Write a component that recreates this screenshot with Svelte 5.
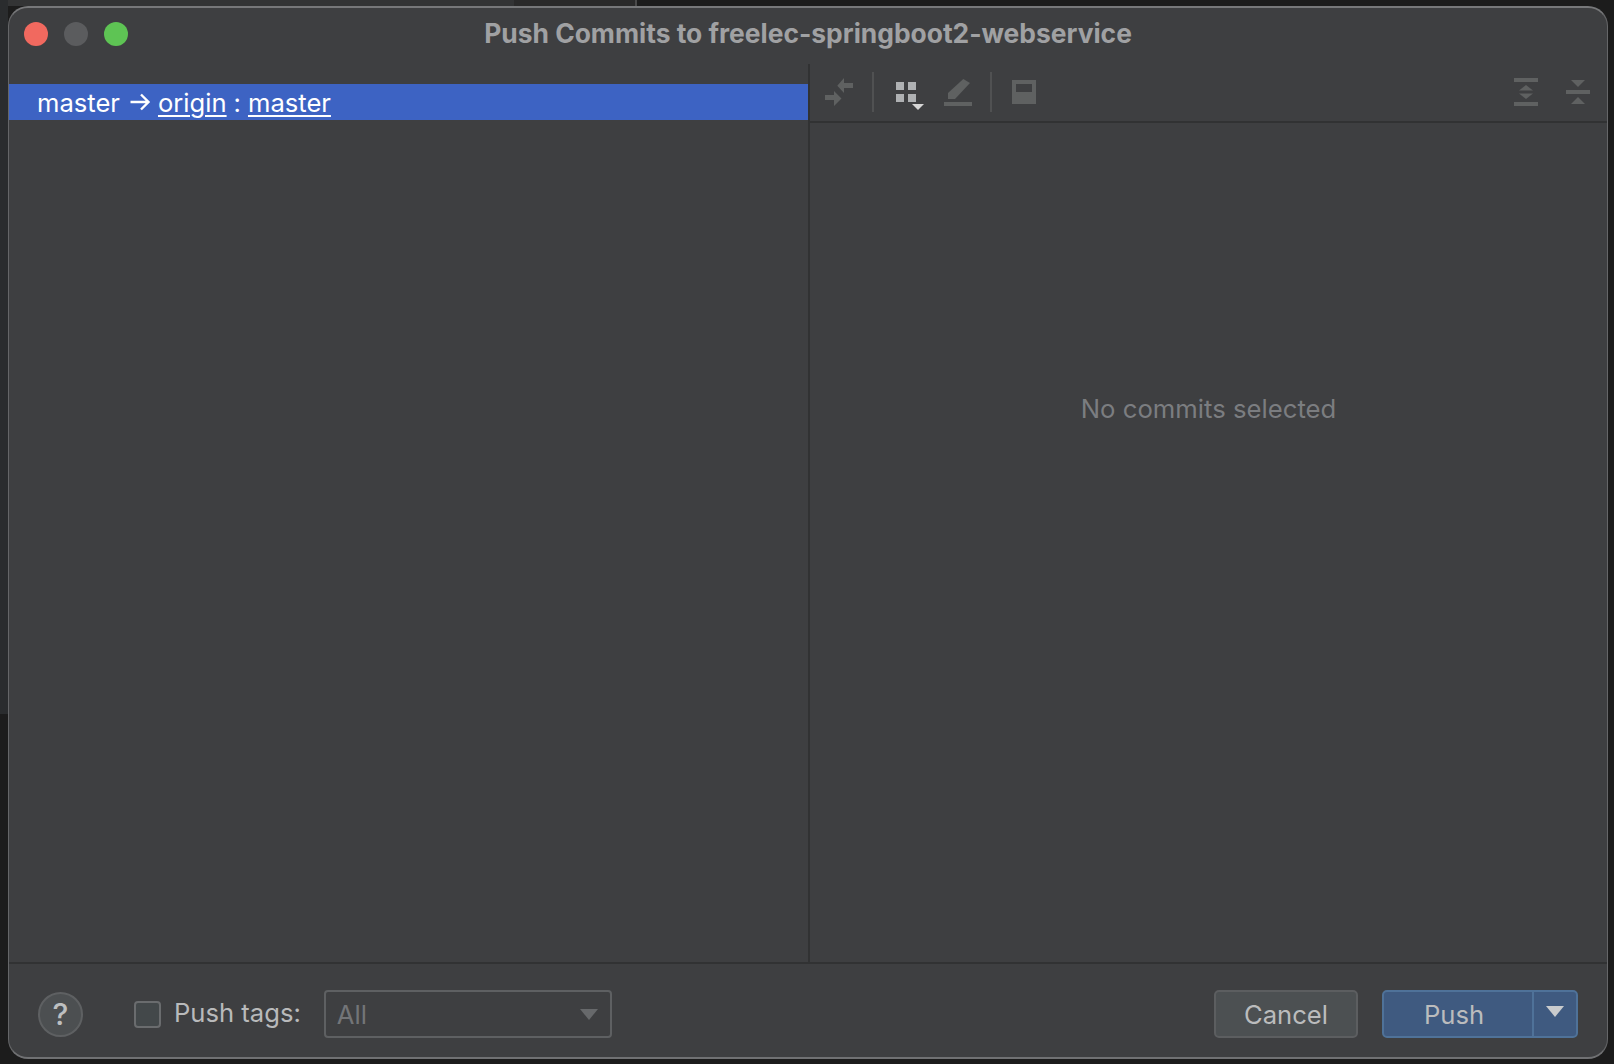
<script>
  const title = 'Push Commits to freelec-springboot2-webservice'
</script>

<div class="window">
  <header class="titlebar">
    <div class="lights">
      <span class="light red"></span>
      <span class="light gray"></span>
      <span class="light green"></span>
    </div>
    <h1>{title}</h1>
  </header>

  <main class="panes">
    <section class="left">
      <div class="row">
        <span>master</span>
        <svg class="arrow" width="22" height="22" viewBox="0 0 22 22" fill="none" stroke="#fff" stroke-width="2.4">
          <path d="M1.500 11H19.500M12 3.500L19.500 11L12 18.500" />
        </svg>
        <u>origin</u>
        <span>:</span>
        <u>master</u>
      </div>
    </section>

    <section class="right">
      <div class="toolbar">
        <svg class="tool" width="28" height="28" viewBox="0 0 28 28" fill="#5f6161">
          <path d="M12.300 7.700L19 0V5H28V10H19V15Z" />
          <path d="M16.500 20.500L9 13V17H0V22H9V28Z" />
        </svg>
        <i class="sep first"></i>
        <div class="grid-icon">
          <svg width="28" height="28" viewBox="0 0 28 28" fill="#afb1b3">
            <rect x="0" y="0" width="8" height="8" />
            <rect x="12" y="0" width="8" height="8" />
            <rect x="0" y="12" width="8" height="8" />
            <rect x="12" y="12" width="8" height="8" />
            <path d="M16 22H28L22 28Z" fill="#d6d6d6" />
          </svg>
        </div>
        <svg class="tool" width="28" height="28" viewBox="0 0 28 28" fill="#5f6161">
          <path d="M4 15L19.300 1L26 5L11 21H4Z" />
          <rect x="0" y="24" width="28" height="4" />
        </svg>
        <i class="sep second"></i>
        <svg class="tool" width="24" height="24" viewBox="0 0 24 24">
          <path fill="#5f6161" fill-rule="evenodd" d="M0 0H24V24H0ZM4 4V12H20V4Z" />
        </svg>
        <div class="spacer"></div>
        <svg class="tool" width="24" height="28" viewBox="0 0 24 28" fill="#5f6161">
          <rect x="0" y="0" width="24" height="4" />
          <path d="M12 7L19 12.500H5Z" />
          <path d="M5 15.500H19L12 21Z" />
          <rect x="0" y="24" width="24" height="4" />
        </svg>
        <svg class="tool collapse" width="24" height="24" viewBox="0 0 24 24" fill="#5f6161">
          <path d="M5 0H19L12 7Z" />
          <rect x="0" y="10" width="24" height="4" />
          <path d="M12 17L19 24H5Z" />
        </svg>
      </div>
      <div class="details">No commits selected</div>
    </section>
  </main>

  <footer class="footer">
    <button class="help">?</button>
    <label class="tags">
      <span class="check"></span>
      <span class="tags-text">Push tags:</span>
    </label>
    <div class="combo">
      <span>All</span>
      <span class="caret"></span>
    </div>
    <div class="spacer"></div>
    <button class="btn cancel">Cancel</button>
    <div class="push">
      <button class="push-main">Push</button>
      <button class="push-menu"><span class="menu-caret"></span></button>
    </div>
  </footer>
</div>

<style>
  :global(body) {
    /* bits of the desktop showing behind the dialog */
    background:
      linear-gradient(#2a2c2e, #2a2c2e) 0 0 / 8px 714px no-repeat,
      linear-gradient(#333435, #333435) 0 0 / 514px 6px no-repeat,
      linear-gradient(#2a2a2a, #2a2a2a) 514px 0 / 121px 6px no-repeat,
      linear-gradient(#4a4a4a, #4a4a4a) 635px 0 / 2px 6px no-repeat,
      #1c1c1c;
    overflow: hidden;
  }

  .window {
    box-sizing: border-box;
    display: flex;
    flex-direction: column;
    height: 1053px;
    margin: 6px 6px 0 8px;
    background: #3e3f41;
    border: 1px solid #656668;
    border-top: 2px solid #77787a;
    border-bottom: 2px solid #707173;
    border-radius: 20px;
    font-family: Inter, 'Liberation Sans', sans-serif;
    color: #bbb;
    overflow: hidden;
  }

  .titlebar {
    display: grid;
    grid-template-columns: 1fr auto 1fr;
    align-items: center;
    height: 52px;
    padding: 0 15px 4px;
    flex: none;
  }

  .lights {
    display: flex;
    gap: 16px;
  }

  .light {
    width: 24px;
    height: 24px;
    border-radius: 50%;
  }

  .red { background: #f1695f; }
  .gray { background: #5b5c5e; }
  .green { background: #5ec454; }

  h1 {
    margin: 0 0 3px;
    font-size: 26.4px;
    font-weight: 700;
    color: #a0a1a3;
    white-space: nowrap;
  }

  .panes {
    display: flex;
    flex: 1;
    min-height: 0;
  }

  .left {
    width: 799px;
    flex: none;
    padding-top: 20px;
  }

  .row {
    display: flex;
    align-items: center;
    gap: 7px;
    height: 36px;
    padding-left: 28px;
    background: #3d63c3;
    color: #fff;
    font-size: 25.6px;
  }

  .row u {
    text-underline-offset: 3px;
    text-decoration-thickness: 2px;
  }

  .arrow {
    margin: 0 0 0 2px;
  }

  .right {
    flex: 1;
    display: flex;
    flex-direction: column;
    border-left: 2px solid #313233;
  }

  .toolbar {
    display: flex;
    align-items: center;
    height: 55px;
    padding: 0 17px 2px 15px;
    border-bottom: 2px solid #313233;
    flex: none;
  }

  .tool {
    display: block;
    flex: none;
  }

  .sep {
    width: 2px;
    height: 40px;
    background: #505152;
    flex: none;
  }

  .sep.first { margin: 0 22px 0 19px; }
  .sep.second { margin: 0 20px 0 18px; }

  .grid-icon {
    height: 28px;
    margin-top: 8px;
    margin-right: 20px;
    flex: none;
  }

  .grid-icon svg {
    display: block;
  }

  .spacer {
    flex: 1;
  }

  .collapse {
    margin-left: 28px;
  }

  .details {
    padding-top: 270px;
    text-align: center;
    font-size: 25.7px;
    color: #7b7d80;
  }

  .footer {
    display: flex;
    align-items: center;
    height: 95px;
    padding: 7px 29px 0 29px;
    border-top: 2px solid #313233;
    box-sizing: border-box;
    flex: none;
  }

  button {
    font-family: inherit;
    color: inherit;
    padding: 0;
    cursor: default;
  }

  .help {
    width: 45px;
    height: 45px;
    border: 2px solid #5e6062;
    border-radius: 50%;
    background: #4c4f51;
    font-size: 30px;
    font-weight: 500;
    color: #bdbfc0;
    margin-right: 51px;
  }

  .tags {
    display: flex;
    align-items: center;
    gap: 13px;
    font-size: 25.6px;
    color: #b9babb;
    margin-right: 23px;
  }

  .tags-text {
    padding-bottom: 3px;
  }

  .check {
    box-sizing: border-box;
    width: 27px;
    height: 27px;
    border: 2px solid #6a6c6e;
    border-radius: 4px;
    background: #43484a;
  }

  .combo {
    box-sizing: border-box;
    display: flex;
    align-items: center;
    justify-content: space-between;
    width: 288px;
    height: 48px;
    padding: 0 12px 0 11px;
    border: 2px solid #5e6062;
    border-radius: 4px;
    font-size: 25.6px;
    color: #737578;
  }

  .caret {
    width: 0;
    height: 0;
    border-left: 9px solid transparent;
    border-right: 9px solid transparent;
    border-top: 11px solid #67696b;
  }

  .btn {
    box-sizing: border-box;
    width: 144px;
    height: 48px;
    border: 2px solid #5c5e60;
    border-radius: 5px;
    background: #4c5052;
    font-size: 25.6px;
    color: #bbbcbd;
    margin-right: 24px;
  }

  .push {
    display: flex;
    box-sizing: border-box;
    width: 196px;
    height: 48px;
    border: 2px solid #4f7299;
    border-radius: 5px;
    background: #3f5a80;
    overflow: hidden;
  }

  .push-main {
    flex: 1;
    border: 0;
    padding-right: 8px;
    background: none;
    font-size: 25.6px;
    color: #bbbcbd;
  }

  .push-menu {
    display: flex;
    align-items: flex-start;
    justify-content: center;
    width: 44px;
    padding-top: 14px;
    border: 0;
    border-left: 2px solid #4f7299;
    background: none;
  }

  .menu-caret {
    width: 0;
    height: 0;
    border-left: 9px solid transparent;
    border-right: 9px solid transparent;
    border-top: 11px solid #c9cbcd;
  }
</style>
